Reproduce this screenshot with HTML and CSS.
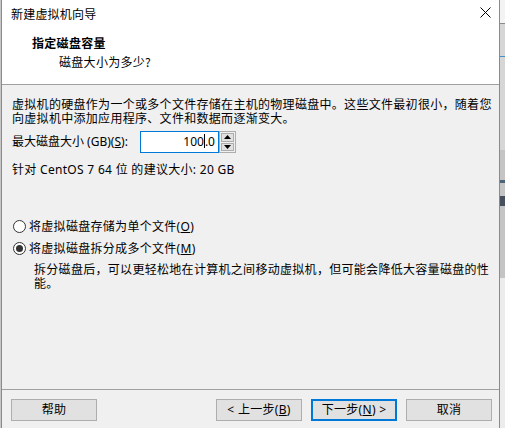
FILE: index.html
```html
<!DOCTYPE html>
<html lang="zh-CN">
<head>
<meta charset="utf-8">
<title>新建虚拟机向导</title>
<link rel="stylesheet" href="styles.css">
</head>
<body>
<div class="screen">
  <div class="edge-left"></div>
  <div class="dialog">
    <div class="titlebar">
      <span class="title">新建虚拟机向导</span>
      <span class="close">
        <svg width="11" height="11" viewBox="0 0 11 11"><path d="M0.5 0.5 L10.5 10.5 M10.5 0.5 L0.5 10.5" stroke="#000" stroke-width="1" fill="none"/></svg>
      </span>
    </div>
    <div class="header">
      <div class="h-title">指定磁盘容量</div>
      <div class="h-sub">磁盘大小为多少?</div>
    </div>
    <div class="body">
      <p class="para">虚拟机的硬盘作为一个或多个文件存储在主机的物理磁盘中。这些文件最初很小，随着您<br>向虚拟机中添加应用程序、文件和数据而逐渐变大。</p>
      <div class="size-row">
        <span class="label">最大磁盘大小 (GB)(<u>S</u>):</span>
        <div class="spin-input">100<span class="caret"></span>.0</div>
        <div class="spin-btns">
          <div class="spin-btn"><svg width="7" height="4" viewBox="0 0 7 4"><path d="M0 4 L3.5 0 L7 4 Z" fill="#000"/></svg></div>
          <div class="spin-btn"><svg width="7" height="4" viewBox="0 0 7 4"><path d="M0 0 L3.5 4 L7 0 Z" fill="#000"/></svg></div>
        </div>
      </div>
      <p class="hint">针对 CentOS 7 64 位 的建议大小: 20 GB</p>
      <div class="radio-row first">
        <span class="radio"></span>
        <span>将虚拟磁盘存储为单个文件(<u>O</u>)</span>
      </div>
      <div class="radio-row second">
        <span class="radio checked"></span>
        <span>将虚拟磁盘拆分成多个文件(<u>M</u>)</span>
      </div>
      <p class="desc">拆分磁盘后，可以更轻松地在计算机之间移动虚拟机，但可能会降低大容量磁盘的性<br>能。</p>
    </div>
    <div class="footer">
      <button class="btn">帮助</button>
      <div class="nav">
        <button class="btn">&lt; 上一步(<u>B</u>)</button>
        <button class="btn default">下一步(<u>N</u>) &gt;</button>
        <button class="btn">取消</button>
      </div>
    </div>
  </div>
  <div class="edge-right"></div>
</div>
</body>
</html>
```

FILE: styles.css
```css
* { box-sizing: border-box; }
html, body {
  margin: 0;
  padding: 0;
  width: 505px;
  height: 428px;
  overflow: hidden;
  background: #f0f0f0;
}
body {
  font-family: "Noto Sans", "Noto Sans CJK SC", sans-serif;
  font-size: 12px;
  color: #000;
}
.screen {
  display: flex;
  width: 505px;
  height: 428px;
}
.edge-left {
  width: 1px;
  background: #c8c8c8;
  flex: none;
}
.edge-right {
  width: 5px;
  flex: none;
  background: linear-gradient(to bottom,
    #f3f3f3 0, #f3f3f3 23px,
    #8a8a8a 23px, #8a8a8a 24px,
    #d6d6d6 24px, #d6d6d6 56px,
    #4a90c8 56px, #4a90c8 57px,
    #d6d6d6 57px, #d6d6d6 150px,
    #c4c4c4 150px, #c4c4c4 180px,
    #4e6378 180px, #4e6378 183px,
    #c4c4c4 183px, #c4c4c4 196px,
    #46505c 196px, #46505c 206px,
    #c4c4c4 206px, #c4c4c4 278px,
    #ececec 278px, #ececec 428px);
}
.dialog {
  width: 499px;
  flex: none;
  height: 428px;
  border-left: 1px solid #8a8a8a;
  border-right: 1px solid #8a8a8a;
  background: #f0f0f0;
  display: flex;
  flex-direction: column;
}
.titlebar {
  height: 27px;
  background: #fff;
  display: flex;
  align-items: center;
  justify-content: space-between;
  padding-left: 9px;
  padding-right: 8px;
  flex: none;
}
.title {
  font-family: "Noto Sans CJK SC", sans-serif;
  font-size: 12px;
  line-height: 16px;
  letter-spacing: 0.2px;
}
.close {
  display: flex;
  width: 11px;
  height: 11px;
  margin-top: -2px;
}
.header {
  height: 58px;
  background: #fff;
  border-bottom: 1px solid #a0a0a0;
  padding-top: 8px;
  padding-left: 30px;
  flex: none;
}
.h-title {
  font-family: "Noto Sans CJK SC", sans-serif;
  font-weight: bold;
  line-height: 16px;
  letter-spacing: 0.3px;
}
.h-sub {
  font-family: "Noto Sans CJK SC", sans-serif;
  line-height: 16px;
  margin-top: 3px;
  padding-left: 27px;
  letter-spacing: 0.3px;
}
.body {
  height: 305px;
  border-bottom: 1px solid #a0a0a0;
  padding-top: 13px;
  padding-left: 10px;
  flex: none;
}
.para, .hint, .desc {
  margin: 0;
  line-height: 14px;
  letter-spacing: 0.3px;
  white-space: nowrap;
}
.size-row {
  display: grid;
  grid-template-columns: 128px 79px 17px;
  align-items: center;
  height: 22px;
  margin-top: 5px;
}
.label {
  white-space: nowrap;
  letter-spacing: 0;
  line-height: 16px;
}
.spin-input {
  height: 22px;
  border: 1px solid #0078d7;
  background: #fff;
  text-align: right;
  padding-right: 3px;
  line-height: 20px;
  font-family: "Noto Sans", sans-serif;
}
.caret {
  display: inline-block;
  width: 1px;
  height: 14px;
  background: #000;
  vertical-align: -2px;
}
.spin-btns {
  height: 22px;
  border: 1px solid #adadad;
  display: flex;
  flex-direction: column;
  gap: 1px;
  padding: 1px;
  background: #f0f0f0;
}
.spin-btn {
  flex: 1;
  background: #e1e1e1;
  border: 1px solid #adadad;
  display: flex;
  align-items: center;
  justify-content: center;
}
.hint {
  margin-top: 10px;
}
.radio-row {
  display: flex;
  align-items: center;
  height: 16px;
  letter-spacing: 0.3px;
  padding-left: 1px;
}
.radio-row.first { margin-top: 41px; }
.radio-row.second { margin-top: 6px; }
.radio {
  width: 13px;
  height: 13px;
  border: 1px solid #333;
  border-radius: 50%;
  background: #fff;
  margin-right: 3px;
  display: flex;
  align-items: center;
  justify-content: center;
  flex: none;
}
.radio.checked::after {
  content: "";
  width: 7px;
  height: 7px;
  border-radius: 50%;
  background: #333;
}
.desc {
  margin-top: 7px;
  padding-left: 22px;
}
.footer {
  flex: none;
  display: flex;
  justify-content: space-between;
  padding: 9px 7px 0 9px;
}
.nav {
  display: flex;
  gap: 9px;
}
.btn {
  width: 86px;
  height: 22px;
  background: #e1e1e1;
  border: 1px solid #adadad;
  font-family: "Noto Sans", "Noto Sans CJK SC", sans-serif;
  font-size: 12px;
  color: #000;
  padding: 0;
  line-height: 18px;
  letter-spacing: 0.3px;
}
.btn.default {
  border: 2px solid #0078d7;
}
```
